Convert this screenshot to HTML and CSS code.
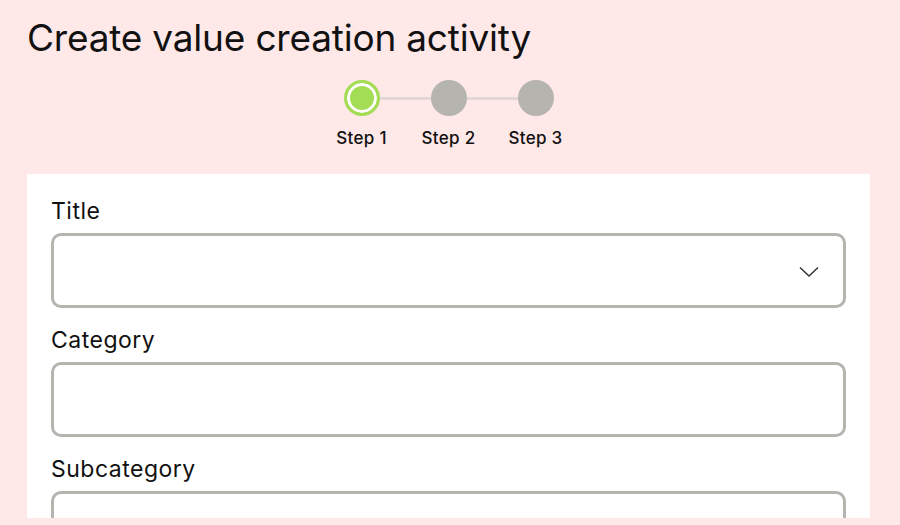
FILE: index.html
```html
<!DOCTYPE html>
<html>
<head>
<meta charset="utf-8">
<link rel="stylesheet" href="styles.css">
</head>
<body>
<div class="page">
  <h1 class="title">Create value creation activity</h1>
  <div class="stepper">
    <div class="step">
      <div class="dot active"></div>
      <div class="step-label">Step 1</div>
    </div>
    <div class="step">
      <div class="dot"></div>
      <div class="step-label">Step 2</div>
    </div>
    <div class="step">
      <div class="dot"></div>
      <div class="step-label">Step 3</div>
    </div>
  </div>
  <div class="card">
    <div class="field">
      <label class="label">Title</label>
      <div class="input select">
        <svg class="chevron" width="20" height="12" viewBox="0 0 20 12"><path d="M1 1.5 L10 10 L19 1.5" fill="none" stroke="#333" stroke-width="1.5"/></svg>
      </div>
    </div>
    <div class="field">
      <label class="label">Category</label>
      <div class="input"></div>
    </div>
    <div class="field">
      <label class="label">Subcategory</label>
      <div class="input"></div>
    </div>
  </div>
</div>
</body>
</html>
```
FILE: styles.css
```css
html, body {
  margin: 0;
  padding: 0;
  background: #ffe8e8;
  font-family: Inter, "Noto Sans", sans-serif;
  color: #111;
}
.page {
  padding: 14px 30px 0 27px;
  height: 518px;
  box-sizing: border-box;
  display: flex;
  flex-direction: column;
  overflow: hidden;
}
.title {
  margin: 0;
  font-size: 37px;
  font-weight: 400;
  letter-spacing: -0.2px;
  line-height: 48px;
}
.stepper {
  display: flex;
  justify-content: center;
  margin-top: 18px;
  width: 843px;
}
.step {
  width: 87px;
  display: flex;
  flex-direction: column;
  align-items: center;
  position: relative;
}
.step + .step::before {
  content: "";
  position: absolute;
  top: 17px;
  right: 50%;
  width: 87px;
  height: 3px;
  background: #e3d6d6;
  z-index: 0;
}
.dot {
  width: 36px;
  height: 36px;
  border-radius: 50%;
  background: #b6b4af;
  position: relative;
  z-index: 1;
  box-sizing: border-box;
}
.dot.active {
  background: #a3dc55;
  border: 3px solid #a3dc55;
  box-shadow: inset 0 0 0 3px #fff;
}
.step-label {
  margin-top: 12px;
  font-size: 17px;
  font-weight: 500;
  line-height: 20px;
  letter-spacing: 0.3px;
}
.card {
  margin-top: 26px;
  width: 843px;
  background: #fff;
  padding: 22px 24px 0 24px;
  box-sizing: border-box;
  flex: 1;
  overflow: hidden;
}
.field {
  display: flex;
  flex-direction: column;
}
.label {
  font-size: 23px;
  line-height: 30px;
  letter-spacing: 0.5px;
  margin-bottom: 7px;
}
.input {
  height: 75px;
  border: 3px solid #b6b4af;
  border-radius: 10px;
  box-sizing: border-box;
  margin-bottom: 17px;
  display: flex;
  align-items: center;
  justify-content: flex-end;
}
.chevron {
  margin-right: 24px;
  margin-top: 2px;
}
```
